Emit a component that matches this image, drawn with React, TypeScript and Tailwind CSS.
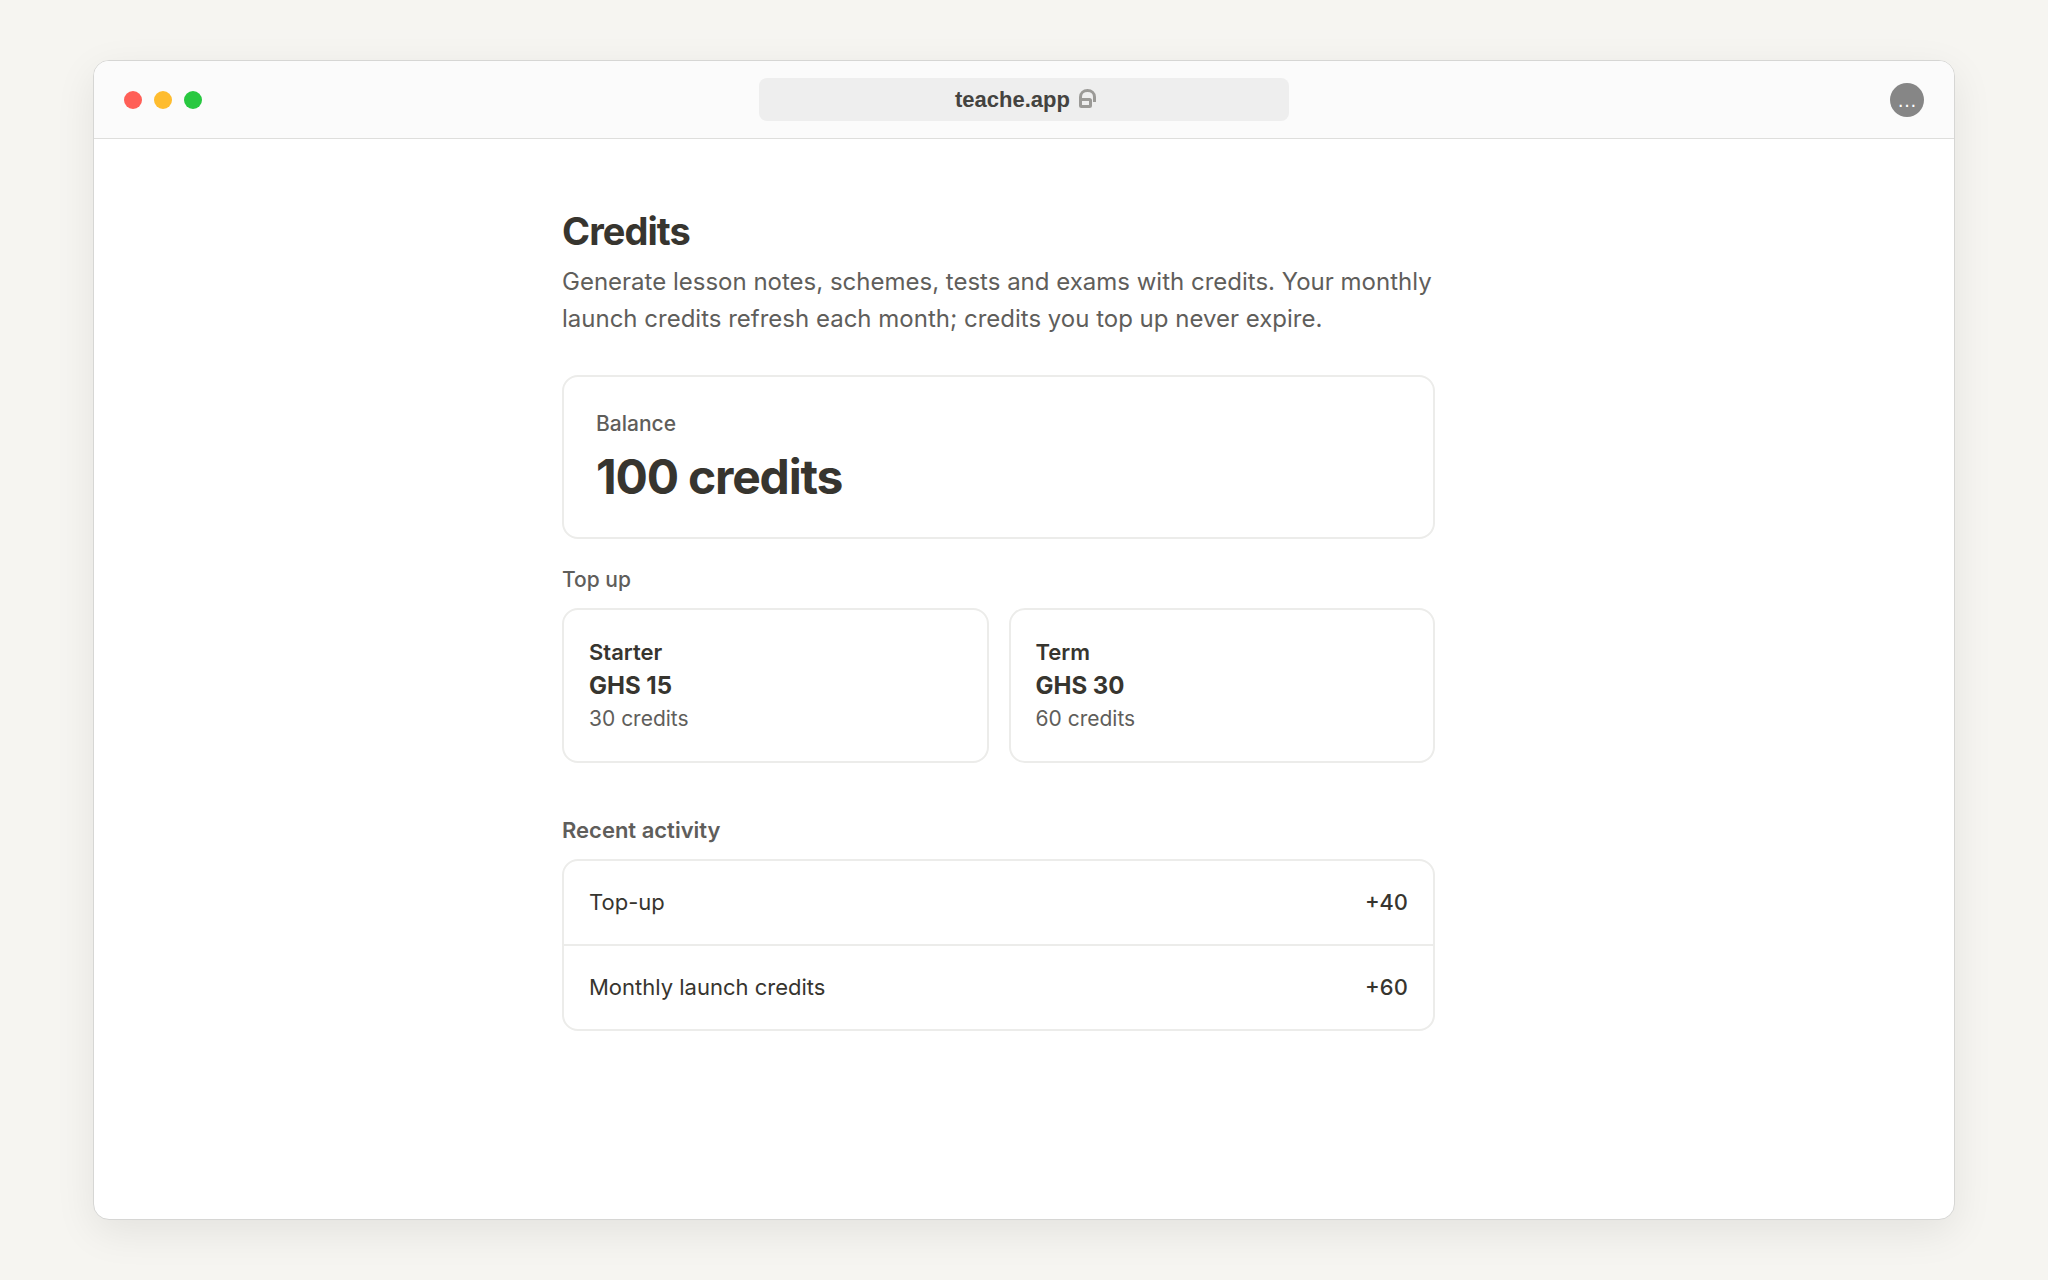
import React from 'react';

interface Pack {
  name: string;
  price: string;
  credits: string;
}

interface Activity {
  label: string;
  amount: string;
}

const PACKS: Pack[] = [
  { name: 'Starter', price: 'GHS 15', credits: '30 credits' },
  { name: 'Term', price: 'GHS 30', credits: '60 credits' }
];

const ACTIVITY: Activity[] = [
  { label: 'Top-up', amount: '+40' },
  { label: 'Monthly launch credits', amount: '+60' }
];

const UnlockIcon: React.FC = () => (
  <svg width="18" height="22" viewBox="0 0 18 22" fill="none" stroke="#9b9a97" strokeWidth="3" aria-hidden="true">
    <rect x="1.5" y="10.5" width="10" height="7" rx="1" />
    <path d="M1.5 11V8C1.5 4 4.5 1.5 8.5 1.5S15.5 4 15.5 8V13" />
  </svg>
);

const TitleBar: React.FC = () => (
  <header className="grid grid-cols-[1fr_530px_1fr] items-center border-b border-[#dededc] bg-[#fbfbfb] px-[30px] py-[17px]">
    <div className="flex gap-3">
      <span className="size-[18px] rounded-full bg-[#ff5f57]"></span>
      <span className="size-[18px] rounded-full bg-[#febc2e]"></span>
      <span className="size-[18px] rounded-full bg-[#28c840]"></span>
    </div>
    <div className="flex h-[43px] items-center justify-center gap-[9px] rounded-lg bg-[#eeeeee] pl-1 font-['Liberation_Sans',Arial,sans-serif] text-[22px] font-bold text-[#444340]">
      <span>teache.app</span>
      <UnlockIcon />
    </div>
    <button
      type="button"
      aria-label="Menu"
      className="size-[34px] justify-self-end rounded-full bg-[#868686] font-['Liberation_Sans',Arial,sans-serif] text-[20px] leading-[34px] text-white"
    >
      …
    </button>
  </header>
);

const App: React.FC = () => {
  return (
    <div className="min-h-screen bg-[#f6f5f1] px-[93px] py-[60px] font-[Inter,sans-serif] text-[#37352f]">
      <div className="flex min-h-[calc(100vh-120px)] flex-col overflow-hidden rounded-2xl border border-[#d6d6d4] bg-white shadow-[0_12px_40px_rgba(0,0,0,0.08)]">
        <TitleBar />

        <main className="flex-1 pt-[68px] pr-[51px]">
          <div className="mx-auto max-w-[873px]">
            <h1 className="text-[38px] leading-[48px] font-bold tracking-tight">Credits</h1>
            <p className="mt-2 text-[24px] leading-[37px] text-[#5f5e5b]">
              Generate lesson notes, schemes, tests and exams with credits. Your monthly launch credits refresh each month; credits you top up never expire.
            </p>

            <section className="mt-[38px] rounded-2xl border-2 border-[#ececea] px-8 py-[31px]">
              <h2 className="text-[21px] leading-[32px] font-medium text-[#5f5e5b]">Balance</h2>
              <p className="mt-2 text-[48px] leading-[58px] font-bold tracking-tight">100 credits</p>
            </section>

            <section className="mt-[25px]">
              <h2 className="text-[21px] leading-[32px] font-medium text-[#5f5e5b]">Top up</h2>
              <div className="mt-3 grid grid-cols-2 gap-5">
                {PACKS.map(pack => (
                  <button key={pack.name} type="button" className="rounded-2xl border-2 border-[#ececea] p-[25px] text-left">
                    <div className="text-[22px] leading-[34px] font-semibold">{pack.name}</div>
                    <div className="text-[24px] leading-[33px] font-bold">{pack.price}</div>
                    <div className="text-[21px] leading-[34px] text-[#5f5e5b]">{pack.credits}</div>
                  </button>
                ))}
              </div>
            </section>

            <section className="mt-[50px]">
              <h2 className="text-[22px] leading-[34px] font-semibold text-[#5f5e5b]">Recent activity</h2>
              <ul className="mt-3 divide-y-2 divide-[#ececea] rounded-2xl border-2 border-[#ececea]">
                {ACTIVITY.map(item => (
                  <li key={item.label} className="flex items-center justify-between px-[25px] py-[25px] text-[22px] leading-[33px]">
                    <span>{item.label}</span>
                    <span className="font-medium tabular-nums">{item.amount}</span>
                  </li>
                ))}
              </ul>
            </section>
          </div>
        </main>
      </div>
    </div>
  );
};

export default App;
